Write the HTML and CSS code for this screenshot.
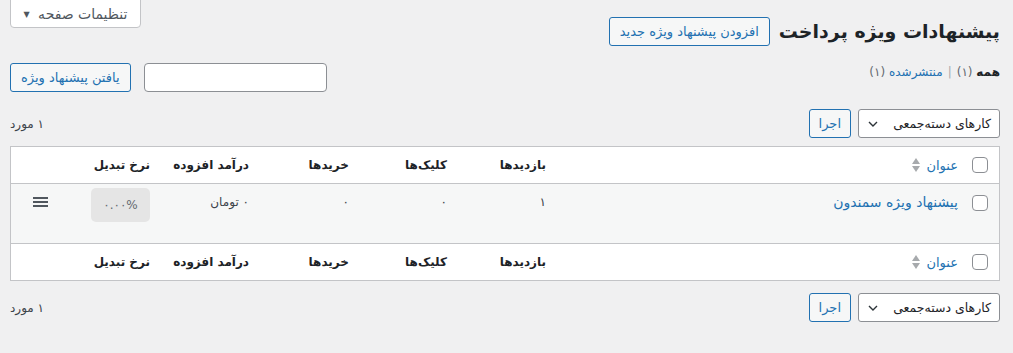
FILE: index.html
```html
<!DOCTYPE html>
<html lang="fa" dir="rtl">
<head>
<meta charset="utf-8">
<title>پیشنهادات ویژه پرداخت</title>
<link rel="stylesheet" href="styles.css">
</head>
<body>
<div class="wrap">
  <div class="top">
    <div class="heading">
      <h1 class="title">پیشنهادات ویژه پرداخت</h1>
      <a class="btn" href="#">افزودن پیشنهاد ویژه جدید</a>
    </div>
    <button class="meta-btn">تنظیمات صفحه <span class="caret">▼</span></button>
  </div>

  <div class="filters">
    <ul class="subsubsub">
      <li><span class="current">همه</span> <span class="count">(۱)</span></li>
      <li class="sep">|</li>
      <li><a href="#">منتشرشده</a> <span class="count">(۱)</span></li>
    </ul>
    <div class="search">
      <input class="search-input" type="search">
      <a class="btn" href="#">یافتن پیشنهاد ویژه</a>
    </div>
  </div>

  <div class="tablenav">
    <div class="bulk">
      <div class="select">کارهای دسته‌جمعی
        <svg class="chev" width="10" height="6" viewBox="0 0 10 6"><path d="M1 1l4 4 4-4" fill="none" stroke="#2c3338" stroke-width="1.4"/></svg>
      </div>
      <a class="btn small" href="#">اجرا</a>
    </div>
    <span class="num">۱ مورد</span>
  </div>

  <table class="list">
    <colgroup>
      <col class="c-check"><col class="c-title"><col class="c-num"><col class="c-num2"><col class="c-num3"><col class="c-num"><col class="c-rate"><col>
    </colgroup>
    <thead>
      <tr>
        <th class="check"><span class="cb"></span></th>
        <th><div class="cell"><a class="sort" href="#">عنوان</a><span class="arrows"><i class="up"></i><i class="down"></i></span></div></th>
        <th><div class="cell">بازدیدها</div></th>
        <th><div class="cell">کلیک‌ها</div></th>
        <th><div class="cell">خریدها</div></th>
        <th><div class="cell">درآمد افزوده</div></th>
        <th><div class="cell">نرخ تبدیل</div></th>
        <th></th>
      </tr>
    </thead>
    <tbody>
      <tr>
        <td class="check top-cb"><span class="cb"></span></td>
        <td class="name"><div class="cell"><a href="#">پیشنهاد ویژه سمندون</a></div></td>
        <td><div class="cell">۱</div></td>
        <td><div class="cell">۰</div></td>
        <td><div class="cell">۰</div></td>
        <td><div class="cell">۰ تومان</div></td>
        <td class="rate"><span class="badge">۰.۰۰%</span></td>
        <td class="handle"><svg width="15" height="10" viewBox="0 0 15 10"><rect y="0" width="15" height="2" fill="#50575e"/><rect y="4" width="15" height="2" fill="#50575e"/><rect y="8" width="15" height="2" fill="#50575e"/></svg></td>
      </tr>
    </tbody>
    <tfoot>
      <tr>
        <th class="check"><span class="cb"></span></th>
        <th><div class="cell"><a class="sort" href="#">عنوان</a><span class="arrows"><i class="up"></i><i class="down"></i></span></div></th>
        <th><div class="cell">بازدیدها</div></th>
        <th><div class="cell">کلیک‌ها</div></th>
        <th><div class="cell">خریدها</div></th>
        <th><div class="cell">درآمد افزوده</div></th>
        <th><div class="cell">نرخ تبدیل</div></th>
        <th></th>
      </tr>
    </tfoot>
  </table>

  <div class="tablenav bottom">
    <div class="bulk">
      <div class="select">کارهای دسته‌جمعی
        <svg class="chev" width="10" height="6" viewBox="0 0 10 6"><path d="M1 1l4 4 4-4" fill="none" stroke="#2c3338" stroke-width="1.4"/></svg>
      </div>
      <a class="btn small" href="#">اجرا</a>
    </div>
    <span class="num">۱ مورد</span>
  </div>
</div>
</body>
</html>
```
FILE: styles.css
```css
html, body {
  margin: 0;
  padding: 0;
  background: #f0f0f1;
  color: #1d2327;
  font-family: "DejaVu Sans", sans-serif;
  font-size: 13px;
}
.wrap {
  padding: 0 13px 0 10px;
}
a { color: #2271b1; text-decoration: none; }

.top {
  display: flex;
  justify-content: space-between;
  align-items: flex-start;
}
.heading {
  display: flex;
  align-items: center;
  gap: 9px;
  padding-top: 17px;
}
.title {
  margin: 0;
  font-size: 19px;
  font-weight: 700;
  line-height: 29px;
  color: #1d2327;
}
.btn {
  display: inline-flex;
  align-items: center;
  height: 27px;
  padding: 0 10px;
  border: 1px solid #2271b1;
  border-radius: 3px;
  background: #f6f7f7;
  color: #2271b1;
  font-size: 13px;
  white-space: nowrap;
}
.btn.small { padding: 0 9px; }
.meta-btn {
  height: 29px;
  width: 131px;
  margin-top: -1px;
  border: 1px solid #c3c4c7;
  border-radius: 0 0 4px 4px;
  background: #fff;
  color: #50575e;
  font-family: inherit;
  font-size: 14px;
  padding: 0;
}
.caret { font-size: 8px; margin-right: 4px; vertical-align: 2px; }

.filters {
  display: flex;
  justify-content: space-between;
  align-items: flex-start;
  margin-top: 17px;
}
.subsubsub {
  list-style: none;
  margin: 0;
  padding: 0;
  display: flex;
  gap: 5px;
  font-size: 12px;
  line-height: 18px;
  color: #646970;
}
.current { color: #1d2327; font-weight: 700; }
.sep { color: #a7aaad; }
.search {
  display: flex;
  gap: 13px;
  align-items: center;
}
.search-input {
  width: 183px;
  height: 29px;
  box-sizing: border-box;
  border: 1px solid #8c8f94;
  border-radius: 4px;
  background: #fff;
  margin: 0;
}

.tablenav {
  display: flex;
  justify-content: space-between;
  align-items: center;
  margin-top: 17px;
  height: 29px;
}
.tablenav.bottom { margin-top: 12px; }
.bulk { display: flex; gap: 7px; align-items: center; }
.select {
  box-sizing: border-box;
  width: 142px;
  height: 29px;
  border: 1px solid #8c8f94;
  border-radius: 3px;
  background: #fff;
  display: flex;
  align-items: center;
  justify-content: space-between;
  padding: 0 8px 0 9px;
  font-size: 12.5px;
  white-space: nowrap;
  color: #1d2327;
}
.num { font-size: 12px; color: #3c434a; }

.list {
  width: 990px;
  margin-top: 8px;
  border: 1px solid #c3c4c7;
  border-spacing: 0;
  background: #fff;
  table-layout: fixed;
}
.c-check { width: 31px; }
.c-title { width: 412px; }
.c-num { width: 99px; }
.c-num2 { width: 98px; }
.c-num3 { width: 100px; }
.c-rate { width: 79px; }
.list th, .list td {
  text-align: right;
  padding: 8px 10px;
  font-size: 12px;
  color: #1d2327;
}
.cell {
  height: 20px;
  display: flex;
  align-items: center;
  white-space: nowrap;
}
.list th { font-weight: 700; }
.list thead th { border-bottom: 1px solid #c3c4c7; vertical-align: middle; }
.list tfoot th { border-top: 1px solid #c3c4c7; }
.list tbody td {
  background: #f6f7f7;
  vertical-align: top;
  padding-top: 8px;
  color: #3c434a;
}
.list tbody td.name { padding-bottom: 31px; }
.list .check { padding: 0 11px 0 0; vertical-align: middle; }
.list tbody .check { padding-top: 11px; vertical-align: top; }
.cb {
  display: block;
  width: 16px;
  height: 16px;
  box-sizing: border-box;
  border: 1px solid #8c8f94;
  border-radius: 4px;
  background: #fff;
}
.sort { font-size: 13px; font-weight: 400; }
.name a { font-size: 14px; }
.arrows {
  display: flex;
  flex-direction: column;
  gap: 2px;
  margin-right: 6px;
}
.arrows i {
  display: block;
  width: 0;
  height: 0;
  border-left: 4px solid transparent;
  border-right: 4px solid transparent;
}
.arrows .up { border-bottom: 6px solid #a7aaad; }
.arrows .down { border-top: 6px solid #a7aaad; }
.list tbody td.rate { padding-top: 4px; }
.badge {
  display: block;
  height: 34px;
  line-height: 34px;
  text-align: center;
  background: #e5e5e5;
  border-radius: 5px;
  color: #646970;
  font-size: 12px;
}
.list tbody td.handle { padding: 13px 0 0 22px; text-align: left; }
.handle svg { display: block; margin-right: auto; }
```
